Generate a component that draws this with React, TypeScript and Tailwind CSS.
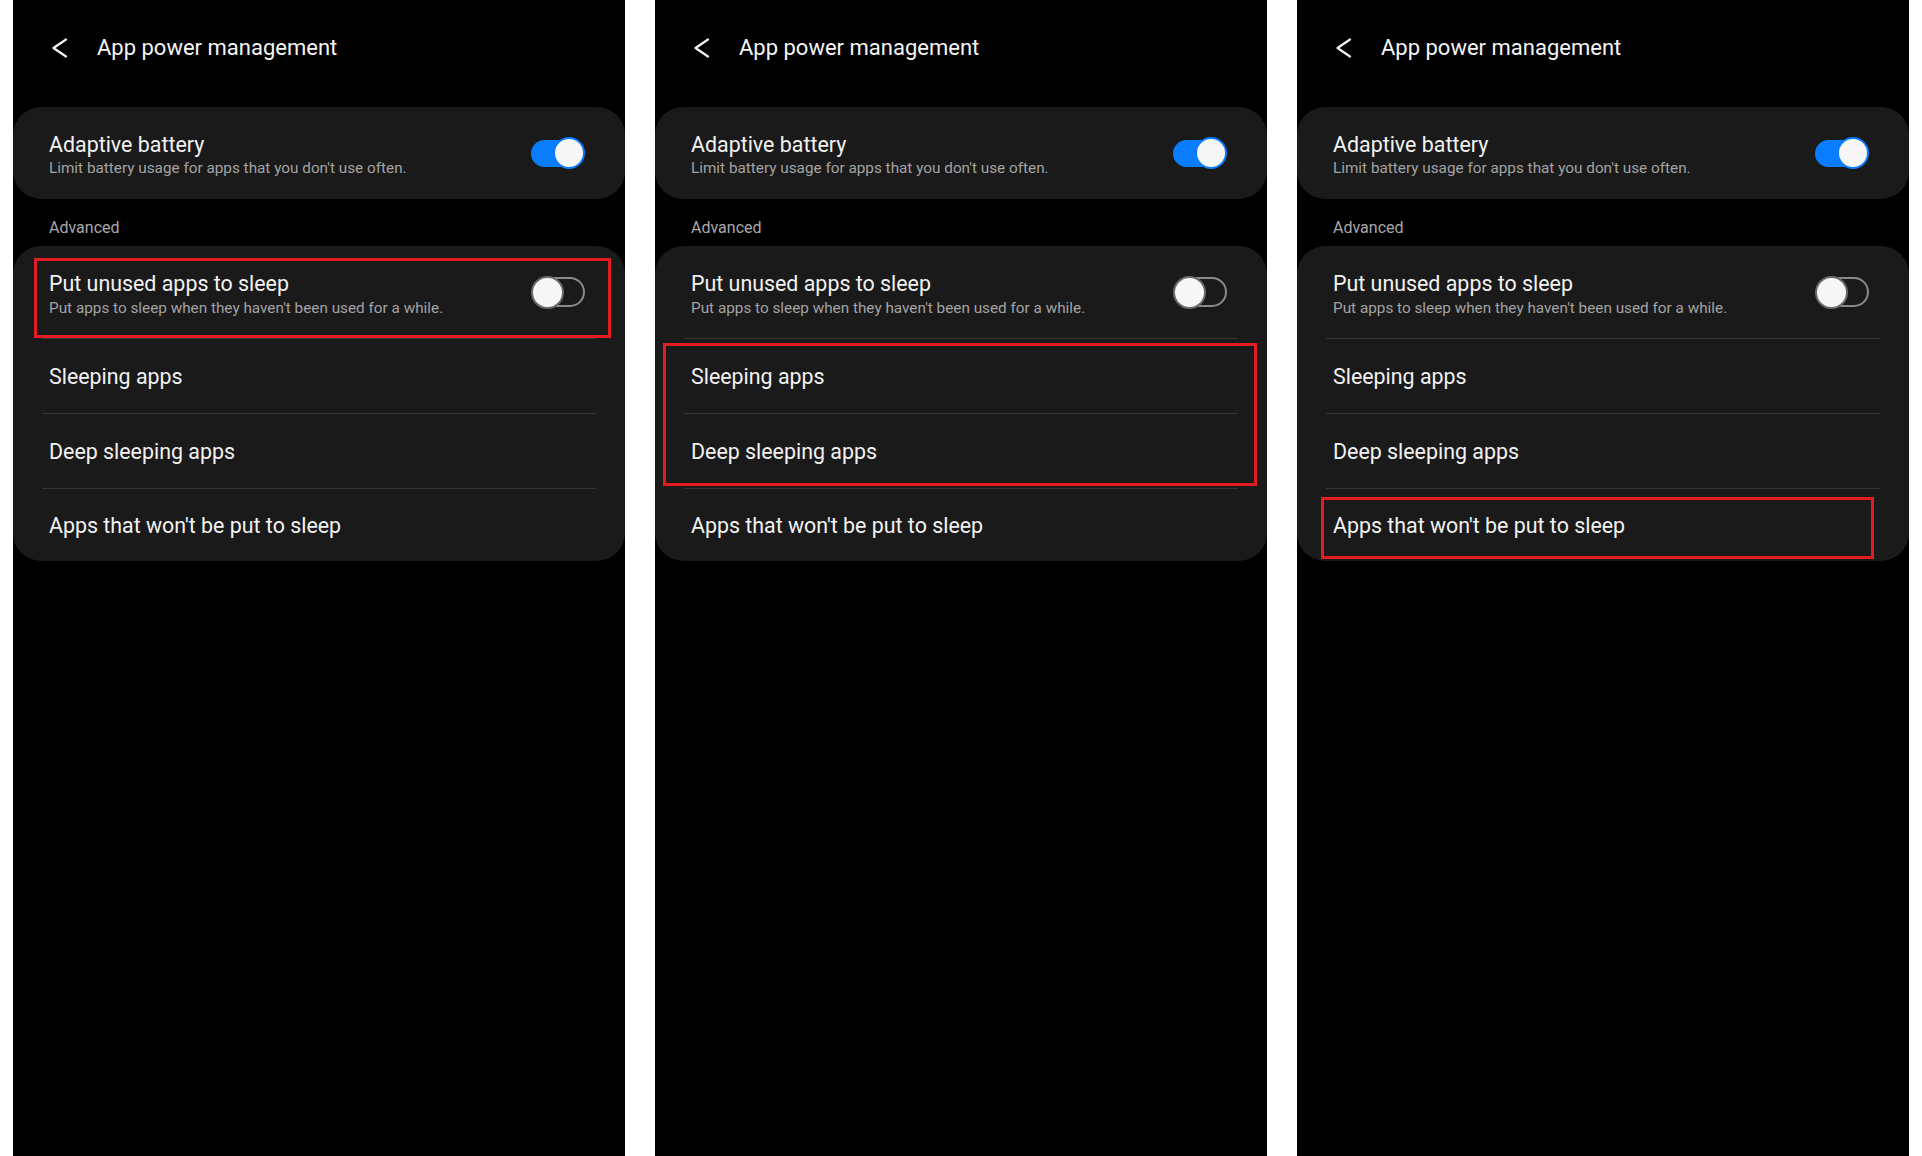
import React from "react";

function Toggle({ on }: { on: boolean }) {
  return (
    <div className="relative w-[54px] h-[32px] shrink-0">
      {on ? (
        <>
          <div className="absolute top-[3px] left-0 w-[50px] h-[27px] rounded-full bg-[#0a7dff]" />
          <div className="absolute top-0 right-0 w-[32px] h-[32px] rounded-full bg-[#f7f7f7] border-2 border-[#0a7dff]" />
        </>
      ) : (
        <>
          <div className="absolute top-[1px] left-[4px] w-[50px] h-[30px] rounded-full border-2 border-[#8a8a8a]" />
          <div className="absolute top-0 left-0 w-[33px] h-[33px] rounded-full bg-[#f7f7f7] border-2 border-[#6a6a6a]" />
        </>
      )}
    </div>
  );
}

function Divider() {
  return <div className="h-px mx-[29px] bg-[#353535]" />;
}

function Panel({ highlight }: { highlight: 1 | 2 | 3 }) {
  return (
    <div className="flex-1 bg-black flex flex-col" style={{ fontFamily: "Roboto, 'Noto Sans', sans-serif" }}>
      <div className="h-[96px] flex items-center">
        <svg width="16" height="20" viewBox="0 0 16 20" className="ml-[39px]" fill="none">
          <polyline points="14,1.5 1.5,10 14,18.5" stroke="#f2f2f2" strokeWidth="2.2" strokeLinecap="round" strokeLinejoin="round" />
        </svg>
        <span className="ml-[29px] text-[22px] leading-[26px] text-[#f5f5f5]">App power management</span>
      </div>

      <div className="mt-[11px] h-[92px] rounded-[28px] bg-[#1a1a1a] flex items-center pl-[36px] pr-[40px]">
        <div className="flex-1 flex flex-col pt-[4px]">
          <span className="text-[21.4px] leading-[24px] text-[#f2f2f2]">Adaptive battery</span>
          <span className="mt-[2px] text-[15.3px] leading-[18px] text-[#a3a3a3]">Limit battery usage for apps that you don't use often.</span>
        </div>
        <Toggle on={true} />
      </div>

      <div className="mt-[20px] pl-[36px] text-[16px] leading-[18px] text-[#a8a8a8]">Advanced</div>

      <div className="relative mt-[9px] rounded-[28px] bg-[#1a1a1a] flex flex-col">
        <div className="h-[92px] flex items-center pl-[36px] pr-[40px]">
          <div className="flex-1 flex flex-col pt-[4px]">
            <span className="text-[21.4px] leading-[24px] text-[#f2f2f2]">Put unused apps to sleep</span>
            <span className="mt-[3px] text-[15.3px] leading-[18px] text-[#a3a3a3]">Put apps to sleep when they haven't been used for a while.</span>
          </div>
          <Toggle on={false} />
        </div>
        <Divider />
        <div className="h-[74px] flex items-center pl-[36px] text-[21.4px] leading-[21px] text-[#f2f2f2]">Sleeping apps</div>
        <Divider />
        <div className="h-[74px] flex items-center pl-[36px] text-[21.4px] leading-[21px] text-[#f2f2f2]">Deep sleeping apps</div>
        <Divider />
        <div className="h-[72px] flex items-center pl-[36px] text-[21.4px] leading-[21px] text-[#f2f2f2]">Apps that won't be put to sleep</div>

        {highlight === 1 && (
          <div className="absolute left-[21px] right-[14px] top-[12px] h-[80px] border-[3px] border-[#e31b23]" />
        )}
        {highlight === 2 && (
          <div className="absolute left-[8px] right-[10px] top-[97px] h-[143px] border-[3px] border-[#e31b23]" />
        )}
        {highlight === 3 && (
          <div className="absolute left-[24px] right-[35px] top-[251px] h-[62px] border-[3px] border-[#e31b23]" />
        )}
      </div>
    </div>
  );
}

export default function App() {
  return (
    <div className="w-[1922px] h-[1156px] bg-white flex px-[13px] gap-[30px]">
      <Panel highlight={1} />
      <Panel highlight={2} />
      <Panel highlight={3} />
    </div>
  );
}
